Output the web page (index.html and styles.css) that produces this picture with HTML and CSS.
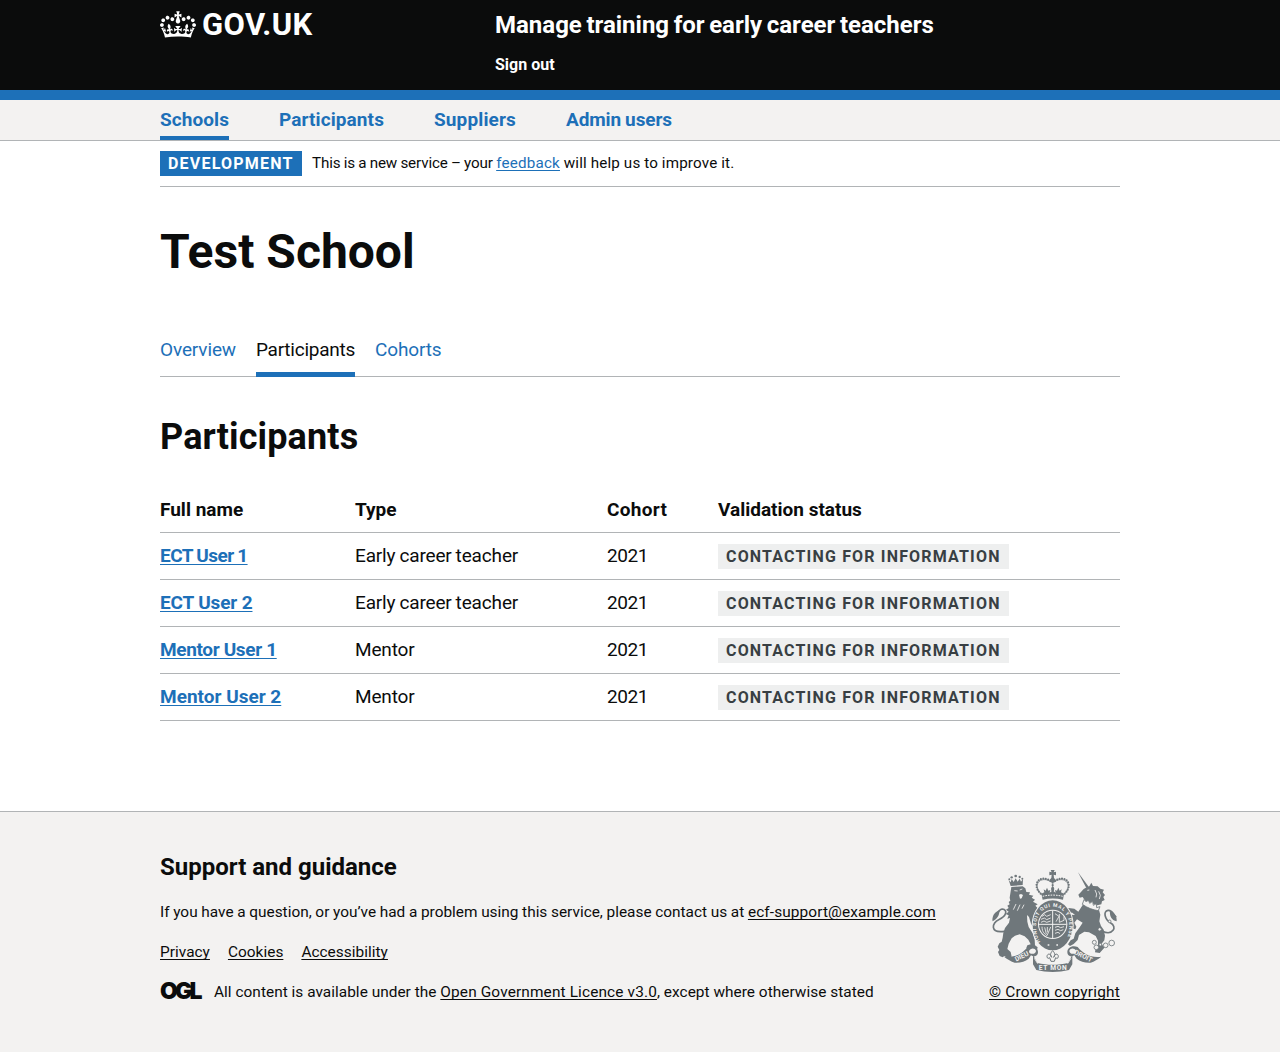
FILE: index.html
```
<!DOCTYPE html>
<html lang="en">
<head>
<meta charset="utf-8">
<title>Test School – Participants</title>
<link rel="stylesheet" href="styles.css">
</head>
<body>
<header class="header">
  <div class="container header-inner">
    <a class="logo" href="#">
      <svg class="crown" viewBox="0 0 132 97" width="36" height="27" aria-hidden="true"><path fill="currentColor" fill-rule="evenodd" d="M25 30.2c3.5 1.5 7.7-.2 9.1-3.7 1.5-3.6-.2-7.8-3.9-9.2-3.6-1.4-7.6.3-9.1 3.9-1.4 3.5.3 7.5 3.9 9zM9 39.5c3.6 1.5 7.8-.2 9.2-3.7 1.5-3.6-.2-7.8-3.9-9.1-3.6-1.5-7.6.2-9.1 3.8-1.4 3.5.3 7.5 3.8 9zM4.4 57.2c3.5 1.5 7.7-.2 9.1-3.8 1.5-3.6-.2-7.7-3.9-9.1-3.5-1.5-7.6.3-9.1 3.8-1.4 3.5.3 7.6 3.9 9.1zm38.3-21.4c3.5 1.5 7.7-.2 9.1-3.8 1.5-3.6-.2-7.7-3.9-9.1-3.6-1.5-7.6.3-9.1 3.8-1.3 3.6.4 7.7 3.9 9.1zm64.4-5.6c-3.6 1.5-7.8-.2-9.1-3.7-1.5-3.6.2-7.8 3.8-9.2 3.6-1.4 7.7.3 9.2 3.9 1.3 3.5-.4 7.5-3.9 9zm15.9 9.3c-3.6 1.5-7.7-.2-9.1-3.7-1.5-3.6.2-7.8 3.7-9.1 3.6-1.5 7.7.2 9.2 3.8 1.5 3.5-.3 7.5-3.8 9zm4.7 17.7c-3.6 1.5-7.8-.2-9.2-3.8-1.5-3.6.2-7.7 3.9-9.1 3.6-1.5 7.7.3 9.2 3.8 1.3 3.5-.4 7.6-3.9 9.1zM89.3 35.8c-3.6 1.5-7.8-.2-9.2-3.8-1.4-3.6.2-7.7 3.9-9.1 3.6-1.5 7.7.3 9.2 3.8 1.4 3.6-.3 7.7-3.9 9.1zM69.7 17.7l8.9 4.7V9.3l-8.9 2.8c-.2-.3-.5-.6-.9-.9L72.4 0H59.6l3.5 11.2c-.3.3-.6.5-.9.9l-8.8-2.8v13.1l8.8-4.7c.3.3.6.7.9.9l-5 15.4v.1c-.2.8-.4 1.6-.4 2.4 0 4.1 3.1 7.5 7 8.1h.2c.3 0 .7.1 1 .1.4 0 .7 0 1-.1h.2c4-.6 7.1-4.1 7.1-8.1 0-.8-.1-1.7-.4-2.4V34l-5.1-15.4c.4-.2.7-.6 1-.9zM66 92.8c16.9 0 32.8 1.1 47.1 3.2 4-16.9 8.9-26.7 14-33.5l-9.6-3.4c1 4.9 1.1 7.2 0 10.2-1.5-1.4-3-4.3-4.2-8.7L108.6 76c2.8-2 5-3.2 7.5-3.3-4.4 9.4-10 11.9-13.6 11.2-4.3-.8-6.3-4.6-5.6-7.9 1-4.7 5.7-5.9 8-.5 4.3-8.7-3-11.4-7.6-8.8 7.1-7.2 7.9-13.5 2.1-21.1-8 6.1-8.1 12.3-4.5 20.8-4.7-5.4-12.1-2.5-9.5 6.2 3.4-5.2 7.9-2 7.2 3.1-.6 4.3-6.4 7.8-13.5 7.2-10.3-.9-10.9-8-11.2-13.8 2.5-.5 7.1 1.8 11 7.3L80.2 60c-4.1 4.4-8 5.3-12.3 5.4 1.4-4.4 8-11.6 8-11.6H55.5s6.4 7.2 7.9 11.6c-4.2-.1-8-1-12.3-5.4l1.4 16.4c3.9-5.5 8.5-7.7 10.9-7.3-.3 5.8-.9 12.8-11.1 13.8-7.2.6-12.9-2.9-13.5-7.2-.7-5 3.8-8.3 7.1-3.1 2.7-8.7-4.6-11.6-9.4-6.2 3.7-8.5 3.6-14.7-4.6-20.8-5.8 7.6-5 13.9 2.2 21.1-4.7-2.6-11.9.1-7.7 8.8 2.3-5.5 7.1-4.2 8.1.5.7 3.3-1.3 7.1-5.7 7.9-3.5.7-9-1.8-13.5-11.2 2.5.1 4.7 1.3 7.5 3.3l-4.7-15.4c-1.2 4.4-2.7 7.2-4.3 8.7-1.1-3-.9-5.3 0-10.2l-9.5 3.4c5 6.9 9.9 16.7 14 33.5 14.8-2.1 30.8-3.2 47.7-3.2z"/></svg>
      <span class="logo-text">GOV.UK</span>
    </a>
    <div class="header-content">
      <a class="service-name" href="#">Manage training for early career teachers</a>
      <a class="sign-out" href="#">Sign out</a>
    </div>
  </div>
</header>
<nav class="primary-nav">
  <div class="container primary-list">
    <a class="primary-link primary-current nav-schools" href="#">Schools</a>
    <a class="primary-link nav-participants" href="#">Participants</a>
    <a class="primary-link nav-suppliers" href="#">Suppliers</a>
    <a class="primary-link nav-admin" href="#">Admin users</a>
  </div>
</nav>
<div class="container">
  <div class="phase-banner">
    <strong class="tag phase-tag">DEVELOPMENT</strong>
    <span class="phase-text">This is a new service – your <a class="link phase-link" href="#">feedback</a><span class="phase-rest"> will help us to improve it.</span></span>
  </div>
  <main class="main">
    <h1 class="title">Test School</h1>
    <nav class="tabs">
      <a class="tab" href="#">Overview</a>
      <a class="tab tab-current" href="#">Participants</a>
      <a class="tab" href="#">Cohorts</a>
    </nav>
    <h2 class="section-title">Participants</h2>
    <table class="table">
      <colgroup><col class="col-name"><col class="col-type"><col class="col-cohort"><col></colgroup>
      <thead><tr><th>Full name</th><th>Type</th><th class="cohort-head">Cohort</th><th>Validation status</th></tr></thead>
      <tbody>
        <tr><td><a class="link name ect-one" href="#">ECT User 1</a></td><td class="type">Early career teacher</td><td class="cohort">2021</td><td><strong class="tag status">CONTACTING FOR INFORMATION</strong></td></tr>
        <tr><td><a class="link name ect-two" href="#">ECT User 2</a></td><td class="type">Early career teacher</td><td class="cohort">2021</td><td><strong class="tag status">CONTACTING FOR INFORMATION</strong></td></tr>
        <tr><td><a class="link name mentor-one" href="#">Mentor User 1</a></td><td class="type">Mentor</td><td class="cohort">2021</td><td><strong class="tag status">CONTACTING FOR INFORMATION</strong></td></tr>
        <tr><td><a class="link name" href="#">Mentor User 2</a></td><td class="type">Mentor</td><td class="cohort">2021</td><td><strong class="tag status">CONTACTING FOR INFORMATION</strong></td></tr>
      </tbody>
    </table>
  </main>
</div>
<footer class="footer">
  <div class="container footer-inner">
    <div class="footer-main">
      <h2 class="footer-title">Support and guidance</h2>
      <p class="footer-text question">If you have a question, or you’ve had a problem using this service, please contact us at <a class="email" href="#">ecf-support@example.com</a></p>
      <div class="footer-links"><a href="#">Privacy</a><a href="#">Cookies</a><a href="#">Accessibility</a></div>
      <div class="licence"><span class="ogl">OGL</span><span class="licence-text">All content is available under the <a class="licence-link" href="#">Open Government Licence v3.0</a>, except where otherwise stated</span></div>
    </div>
    <a class="copyright" href="#">
      <svg class="crest" viewBox="36 30 375 306" width="125" height="102" aria-hidden="true">
        <!-- lion -->
        <g fill="currentColor">
          <path d="M86 60l6 18 36-3 1-18-6 8-4-9-6 9-6-10-6 11-6-9-3 10z"/><circle cx="107" cy="48" r="4"/><circle cx="95" cy="52" r="3.500"/><circle cx="119" cy="51" r="3.500"/><circle cx="88" cy="58" r="3"/><circle cx="127" cy="56" r="3"/>
          <path d="M94 81l34-2 8 6 3 11 11 1-3 7 13 3-5 6 10 6-6 6 14 8-7 4 10 10-3 12 2 20-10 8-5 16-7-12-6-20-6-6 1 20 4 16 13 20 5 18 1 17 8 6-2 7-28-1-4-5 3-7 10-3-7-14-11-10-15-6-14 4-10 8-9 16-4 16 10 9 3 14-14 3-8-5-5 4-9-4-5-12 4-6-5-10 5-10 7-5 3-12 2-15 5-14 12-16 3-14-8 2 4-10-9-4 9-7-8-6 8-5-4-7 7-4-3-7 5-4-2-9z"/>
        </g>
        <path d="M73 214C28 220 36 188 56 179 80 169 84 149 67 147 54 147 57 163 44 168" fill="none" stroke="currentColor" stroke-width="5"/>
        <path d="M38 184c-3-10 2-26 20-34 1 14-5 26-20 34z" fill="currentColor"/>
        <path d="M103 92l10 1M119 90l8-3M108 132l-8 17M120 134l-8 18M132 134l-6 12" fill="none" stroke="#f3f2f1" stroke-width="2.500"/>
        <path d="M117 104l6-2 6 3-4 10-5 1z" fill="#f3f2f1"/>
        <!-- unicorn -->
        <path d="M294 37l32 43-7 4z" fill="currentColor"/>
        <g fill="currentColor">
          <path d="M320 82l8-3 6-11 5 10 14 1 8 7 11 3-4 8 7 8-5 6 4 9-8 4-2 9-12 3-37-14-7-11-9 2-4-9 8-8 8-9z"/>
          <path d="M310 132l46 14 5 18-3 20 5 14 8 11 4 18-2 14-8 10 8 12-14 16-14-2 2-13 7-10 0-12-7-14-20-11-14-2-16 10-4 15-12 12-11 6-6-5 8-12 9-5 5-16 13-18 9-14-17-10-8 10 6 12-3 8-9-3-1-13-14-12 1-10 10-6 12 1-8-7-13-1-1 14-8-2 1-16 10-9 17 2 12 9z"/>
        </g>
        <path d="M366 213C398 229 414 200 391 188 375 179 368 154 384 151 399 149 398 166 409 171" fill="none" stroke="currentColor" stroke-width="5"/>
        <path d="M410 184c-16-3-22-18-20-32 14 4 21 18 20 32z" fill="currentColor"/>
        <path d="M322 91l6-1M345 90l5 12-2 10M356 94l5 12-3 11" fill="none" stroke="#f3f2f1" stroke-width="2.500"/>
        <path d="M307 133l5-14 7 7 6-6 4 10 9-6 2 12 9-5 1 12 10-3-5 12c-16-2-32-8-48-19z" fill="#f3f2f1" stroke="currentColor" stroke-width="2.500"/>
        <g fill="#f3f2f1" stroke="currentColor" stroke-width="2.500"><circle cx="343" cy="247" r="6"/><circle cx="349" cy="262" r="7"/><circle cx="361" cy="254" r="4"/><circle cx="377" cy="256" r="7"/><circle cx="395" cy="249" r="8.500"/><circle cx="389" cy="184" r="4"/><circle cx="359" cy="208" r="5"/></g>
        <!-- garter and shield -->
        <ellipse cx="218" cy="196" rx="63" ry="78" fill="#f3f2f1"/>
        <ellipse cx="218" cy="196" rx="60" ry="75" fill="currentColor"/>
        <path id="garter" d="M181 246C158 212 164 143 218 140C272 143 278 212 255 246" fill="none"/>
        <text class="garter-text"><textPath href="#garter" textLength="252">HONI SOIT QUI MAL Y PENSE</textPath></text>
        <circle cx="218" cy="193" r="44" fill="#f3f2f1"/><circle cx="218" cy="193" r="41" fill="currentColor"/>
        <path d="M218 151v84M176 193h84" stroke="#f3f2f1" stroke-width="3"/>
        <path d="M186 169l8-5 6 5 12-5M183 178l10-4 7 5 12-5M183 187l9-4 8 4 12-4M225 161l12 8-9 16M238 162v25l14-6v-12M225 202l9-3 8 4 10-3M225 211l9-3 8 4 8-3M225 220l9-3 6 4M186 200c0 18 10 23 15 27l11-26M194 202l5 20M202 201v16" fill="none" stroke="#f3f2f1" stroke-width="2.500"/>
        <path d="M203 255h5M229 255h5" stroke="#f3f2f1" stroke-width="5"/>
        <!-- imperial crown -->
        <g fill="none" stroke="currentColor"><path d="M186 104c-32-26-6-60 28-38M250 104c32-26 6-60-28-38" stroke-width="2"/><path d="M182 101c-30-29 0-61 32-36M254 101c30-29 0-61-32-36M218 68v28" stroke-width="6.500" stroke-dasharray="0 7.500" stroke-linecap="round"/></g>
        <path d="M212 30h12l-3 7 7-2v11l-7-2 1 10 5 5-3 8h-12l-3-8 5-5 1-10-7 2V35l7 2zM184 101l9-4-2-9 6 4 4-9 4 9 6-2-2 8 6-4-2-8 5-8 5 8-2 8 6 4-2-8 6 2 4-9 4 9 6-4-2 9 9 4-3 18c-20-5-42-5-61 0z" fill="currentColor"/>
        <path d="M188 109c20-5 41-5 60 0" fill="none" stroke="#f3f2f1" stroke-width="3" stroke-dasharray="5 3"/>
        <!-- motto ribbon -->
        <path d="M72 290c30 5 54-8 71-29 17-6 31 2 31 16 0 11-12 16-21 9l-7 10c-11 8-24 13-42 12-11-4-21-10-32-18zM364 290c-30 5-54-8-71-29-17-6-31 2-31 16 0 11 12 16 21 9l7 10c11 8 24 13 42 12 11-4 21-10 32-18z" fill="currentColor"/>
        <path d="M156 266c-10 2-12 12-3 15 9 2 15-3 15-9-2-5-7-7-12-6zM280 266c10 2 12 12 3 15-9 2-15-3-15-9 2-5 7-7 12-6z" fill="#f3f2f1"/>
        <path d="M159 285l13 24c30 7 62 7 92 0l13-24v28l-10 17c-31 8-67 8-98 0l-10-17z" fill="currentColor"/>
        <path d="M163 295l10 16M273 295l-10 16" stroke="#f3f2f1" stroke-width="2.500"/>
        <path d="M218 272c-9 9-7 16-3 20-3-13-14-12-14-2 0 6 6 6 8 3l4 11h10l4-11c2 3 8 3 8-3 0-10-11-11-14 2 4-4 6-11-3-20z" fill="none" stroke="currentColor" stroke-width="3"/>
        <g class="motto"><text x="128" y="295" transform="rotate(-26 128 295)">DIEU</text><text x="218" y="329" textLength="84">ET MON</text><text x="307" y="294" transform="rotate(26 307 294)">DROIT</text></g>
      </svg>
      <span class="copyright-text">© Crown copyright</span>
    </a>
  </div>
</footer>
</body>
</html>
```
FILE: styles.css
```
* { box-sizing: border-box; }
body { margin: 0; background: #fff; color: #0b0c0c; font-family: Roboto, "Liberation Sans", sans-serif; font-size: 19px; line-height: 25px; }
a { color: inherit; text-underline-offset: 1.5px; text-decoration-thickness: 1px; text-decoration-skip-ink: none; }
h1, h2, p { margin: 0; }
.container { width: 960px; margin: 0 auto; }
.link { color: #1d70b8; }

.header { background: #0b0c0c; color: #fff; border-bottom: 10px solid #1d70b8; }
.header-inner { display: flex; height: 90px; padding-top: 10px; }
.header a { text-decoration: none; }
.logo { display: flex; gap: 6px; width: 335px; }
.crown { margin-top: 1px; }
.logo-text { font-size: 31px; font-weight: 700; line-height: 30px; letter-spacing: 0.4px; }
.header-content { display: flex; flex-direction: column; }
.service-name { font-size: 24px; font-weight: 700; line-height: 30px; word-spacing: -1.4px; }
.sign-out { margin-top: 15px; font-size: 16px; font-weight: 700; line-height: 20px; }

.primary-nav { background: #f3f2f1; border-bottom: 1px solid #b1b4b6; }
.primary-list { display: flex; gap: 50px; }
.primary-link { height: 40px; padding-top: 7px; color: #1d70b8; font-weight: 700; text-decoration: none; white-space: nowrap; }
.primary-current { border-bottom: 4px solid #1d70b8; }
.nav-schools { width: 69px; letter-spacing: 0.07px; }
.nav-participants { width: 105px; letter-spacing: 0.1px; }
.nav-suppliers { width: 82px; letter-spacing: 0.13px; }
.nav-admin { width: 106px; letter-spacing: -0.1px; word-spacing: -0.6px; }

.tag { display: inline-block; padding: 5px 8px 4px; font-size: 16px; font-weight: 700; line-height: 16px; letter-spacing: 1.2px; white-space: nowrap; }
.phase-banner { display: flex; gap: 10px; height: 46px; padding: 10px 0; border-bottom: 1px solid #b1b4b6; }
.phase-tag { width: 142px; background: #1d70b8; color: #fff; }
.phase-text { font-size: 15.2px; line-height: 24px; letter-spacing: -0.12px; word-spacing: -0.4px; }
.phase-link { letter-spacing: 0.2px; }
.phase-rest { letter-spacing: 0.16px; word-spacing: -0.1px; }

.main { padding: 40px 0 90px; }
.title { font-size: 48px; line-height: 50px; }
.tabs { display: flex; gap: 20px; margin-top: 60px; border-bottom: 1px solid #b1b4b6; }
.tab { margin-bottom: -1px; padding-bottom: 10px; border-bottom: 5px solid transparent; color: #1d70b8; text-decoration: none; letter-spacing: -0.13px; }
.tab-current { width: 99px; border-color: #1d70b8; color: #0b0c0c; letter-spacing: -0.25px; }
.section-title { margin-top: 40px; font-size: 36px; line-height: 40px; letter-spacing: 0.13px; }

.table { width: 100%; margin-top: 30px; border-spacing: 0; table-layout: fixed; }
.col-name { width: 195px; }
.col-type { width: 252px; }
.col-cohort { width: 111px; }
.table tr { height: 47px; }
.table thead tr { height: 46px; }
.table th, .table td { padding: 10px 0; border-bottom: 1px solid #b1b4b6; text-align: left; vertical-align: top; }
.table .cohort-head { letter-spacing: 0.3px; }
.name { font-weight: 700; }
.ect-one { letter-spacing: -0.5px; word-spacing: -0.7px; }
.ect-two { letter-spacing: -0.15px; }
.mentor-one { letter-spacing: -0.35px; }
.type { letter-spacing: -0.15px; word-spacing: -0.6px; }
.cohort { letter-spacing: -0.4px; }
.status { display: block; width: 291px; margin: 1px 0 -1px; background: #eeefef; color: #383f43; letter-spacing: 1.17px; }

.footer { background: #f3f2f1; border-top: 1px solid #b1b4b6; }
.footer-inner { display: flex; justify-content: space-between; height: 240px; padding-top: 40px; font-size: 15.4px; line-height: 20px; white-space: nowrap; }
.footer-title { font-size: 24px; line-height: 30px; }
.footer-text { margin-top: 20px; }
.question { word-spacing: -0.15px; }
.email { letter-spacing: 0.11px; }
.footer-links { display: flex; gap: 18px; margin-top: 20px; letter-spacing: 0.03px; }
.licence { display: flex; margin-top: 20px; }
.licence-text { letter-spacing: 0.03px; }
.licence-link { letter-spacing: 0.14px; }
.ogl { width: 54px; font-family: Inter, sans-serif; font-size: 23px; font-weight: 900; line-height: 18px; letter-spacing: -2.9px; }
.copyright { display: flex; flex-direction: column; align-items: center; width: 131px; padding-top: 18px; text-decoration: none; }
.crest { color: #6f777b; }
.copyright-text { margin-top: 10px; text-decoration: underline; letter-spacing: 0.21px; }
.garter-text { fill: #f3f2f1; font: 700 15px Roboto, sans-serif; }
.motto { fill: #f3f2f1; font: 700 20px Roboto, sans-serif; text-anchor: middle; }
```
